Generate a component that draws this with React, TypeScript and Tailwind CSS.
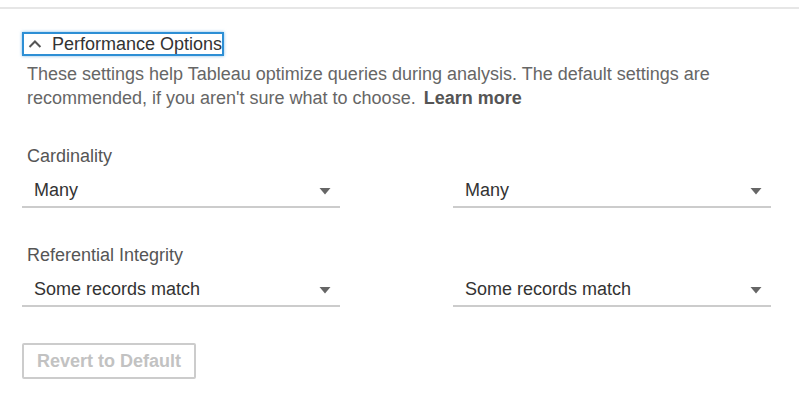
import React from "react";

function Select({ value }: { value: string }) {
  return (
    <div className="flex h-[34px] items-center justify-between border-b-2 border-[#cccccc] pl-3 pr-[9px] text-[18px] text-[#333333]">
      <span>{value}</span>
      <svg width="12" height="8" viewBox="0 0 12 8" className="mt-[1px]">
        <path d="M0.5 1 L11.5 1 L6 7.5 Z" fill="#666666" />
      </svg>
    </div>
  );
}

function Row({ label, value }: { label: string; value: string }) {
  return (
    <div>
      <div className="pl-[5px] text-[18px] leading-[24px] text-[#555555]">{label}</div>
      <div className="mt-[6px] grid grid-cols-[318px_318px] justify-between">
        <Select value={value} />
        <Select value={value} />
      </div>
    </div>
  );
}

export default function App() {
  return (
    <div className="h-[403px] w-[799px] bg-white font-['Liberation_Sans',Arial,sans-serif]">
      <div className="pt-[7px]">
        <div className="h-[2px] bg-[#e6e6e6]" />
      </div>
      <div className="pl-[22px] pr-[28px]">
        <div className="mt-[23px] flex h-[24px] w-[202px] items-center whitespace-nowrap border-2 border-[#2d8fd5] pl-[4px] shadow-[0_0_3px_rgba(45,143,213,0.6)]">
          <svg width="14" height="10" viewBox="0 0 14 10">
            <path d="M1.5 8 L7 2.5 L12.5 8" fill="none" stroke="#555555" strokeWidth="2" />
          </svg>
          <span className="ml-[10px] text-[18px] leading-none text-[#333333]">Performance Options</span>
        </div>
        <p className="mt-[6px] max-w-[720px] pl-[5px] text-[18px] leading-[24px] text-[#666666]">
          These settings help Tableau optimize queries during analysis. The default settings are recommended, if you aren't sure what to choose.{" "}
          <span className="ml-[3px] font-bold text-[#555555]">Learn more</span>
        </p>
        <div className="mt-[34px]">
          <Row label="Cardinality" value="Many" />
        </div>
        <div className="mt-[35px]">
          <Row label="Referential Integrity" value="Some records match" />
        </div>
        <button className="mt-[36px] h-[36px] w-[174px] rounded-[2px] border-2 border-[#cccccc] text-[18px] font-bold text-[#c2c2c2]">
          Revert to Default
        </button>
      </div>
    </div>
  );
}
